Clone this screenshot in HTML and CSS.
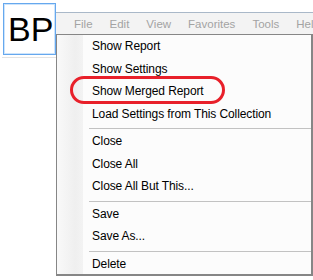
FILE: index.html
```html
<!DOCTYPE html>
<html lang="en">
<head>
  <meta charset="UTF-8" />
  <title>BP</title>
  <link rel="stylesheet" href="styles.css">
</head>
<body>
  <div class="app">
    <div class="side">
      <div class="logo-box">BP</div>
      <div class="list-box"></div>
    </div>

    <div class="main">
      <div class="menubar">
        <span class="grip"></span>
        <span class="menu-item">File</span>
        <span class="menu-item">Edit</span>
        <span class="menu-item">View</span>
        <span class="menu-item">Favorites</span>
        <span class="menu-item">Tools</span>
        <span class="menu-item">Help</span>
      </div>
    </div>

    <!-- dropdown of the File menu -->
    <div class="dropdown">
      <div class="gutter"></div>
      <ul class="items">
        <li>Show Report</li>
        <li>Show Settings</li>
        <li>Show Merged Report</li>
        <li>Load Settings from This Collection</li>
        <li class="sep"></li>
        <li>Close</li>
        <li>Close All</li>
        <li>Close All But This...</li>
        <li class="sep"></li>
        <li>Save</li>
        <li>Save As...</li>
        <li class="sep"></li>
        <li>Delete</li>
      </ul>
      <div class="mark"></div>
    </div>
  </div>
</body>
</html>
```

FILE: styles.css
```css
* {
  box-sizing: border-box;
}

body {
  margin: 0;
  background: #ffffff;
  font-family: Tahoma, "DejaVu Sans", sans-serif;
  font-size: 11px;
  overflow: hidden;
}

.app {
  position: relative;
  display: flex;
  width: 313px;
  height: 280px;
  overflow: hidden;
}

.side {
  width: 56px;
  padding: 3px 0 0 3px;
}

.logo-box {
  width: 53px;
  height: 52px;
  border: 1px solid #66a8ee;
  box-shadow: inset 0 0 0 1px #cde4fb;
  font-family: "Liberation Sans", Arial, sans-serif;
  font-size: 34px;
  line-height: 50px;
  padding-left: 4px;
  color: #000;
}

.list-box {
  margin-top: 2px;
  margin-left: -1px;
  width: 54px;
  height: 200px;
  border-top: 1px solid #e3e3e3;
}

.main {
  flex: 1;
  min-width: 0;
  padding-top: 12px;
}

.menubar {
  height: 22px;
  background: #f3f3f3;
  border-top: 1px solid #a9b8c8;
  display: flex;
  align-items: center;
  color: #a3a3a3;
  font-family: "Liberation Sans", Arial, sans-serif;
  font-size: 11.5px;
  white-space: nowrap;
  overflow: hidden;
}

.grip {
  width: 2px;
  height: 18px;
  margin: 0 14px 0 4px;
  background: repeating-linear-gradient(#a8a8a8 0 1px, transparent 1px 3px);
}

.menu-item {
  margin-right: 17px;
}

.dropdown {
  position: absolute;
  left: 56px;
  top: 34px;
  width: 257px;
  height: 242px;
  background: #fcfcfc;
  border: 1px solid #868686;
  border-right-width: 2px;
  border-bottom-width: 2px;
  display: flex;
}

.gutter {
  width: 26px;
  background: linear-gradient(to right, #f9f9f9, #efefef 70%, #f3f3f3);
}

.items {
  list-style: none;
  margin: 0;
  padding: 0;
  flex: 1;
  font-family: "Liberation Sans", Arial, sans-serif;
  font-size: 12px;
  letter-spacing: -0.1px;
  color: #000;
}

.items li {
  height: 22.5px;
  line-height: 22px;
  padding-left: 9px;
}

.items li.sep {
  height: 1px;
  margin: 3px 0 1px 6px;
  border-top: 1px solid #c2c2c2;
}

.mark {
  position: absolute;
  left: 13px;
  top: 41px;
  width: 155px;
  height: 28px;
  border: 3px solid #e8202a;
  border-radius: 14px;
}
```
